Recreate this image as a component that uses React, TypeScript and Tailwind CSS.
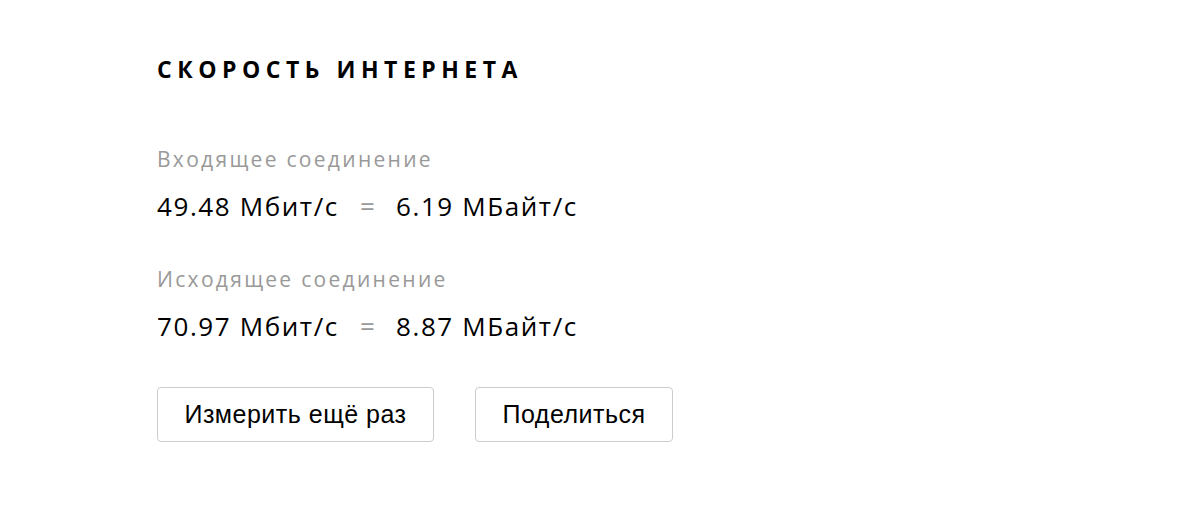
export default function App() {
    const rows = [
        {label: "Входящее соединение", mbit: "49.48", mbyte: "6.19"},
        {label: "Исходящее соединение", mbit: "70.97", mbyte: "8.87"},
    ]

    return (
        <div className="w-[1200px] h-[518px] bg-white pl-[157px] pt-[54px] font-['Open_Sans',sans-serif]">
            <h1 className="text-[23px] leading-[30px] font-bold tracking-[0.24em] text-black">СКОРОСТЬ ИНТЕРНЕТА</h1>

            <div className="mt-[62px] flex flex-col gap-y-[44px]">
                {
                    rows.map((row, i) => (
                        <div key={i}>
                            <p className="text-[21px] leading-[26px] tracking-[2.3px] text-[#999999]">{row.label}</p>
                            <div className="mt-[18px] flex items-center text-[26px] leading-[32px] tracking-[1.6px] text-black">
                                <span className="w-[203px]">{row.mbit} Мбит/с</span>
                                <span className="w-[36px] text-[#999999]">=</span>
                                <span>{row.mbyte} МБайт/с</span>
                            </div>
                        </div>
                    ))
                }
            </div>

            <div className="mt-[45px] flex items-center gap-x-[41px] font-['Liberation_Sans',Arial,sans-serif]">
                <button type="button"
                        className="h-[55px] w-[277px] rounded-[4px] border border-[#cccccc] text-[25px] tracking-[0.5px] text-black bg-white">
                    Измерить ещё раз
                </button>
                <button type="button"
                        className="h-[55px] w-[198px] rounded-[4px] border border-[#cccccc] text-[25px] tracking-[0.5px] text-black bg-white">
                    Поделиться
                </button>
            </div>
        </div>
    )
}
